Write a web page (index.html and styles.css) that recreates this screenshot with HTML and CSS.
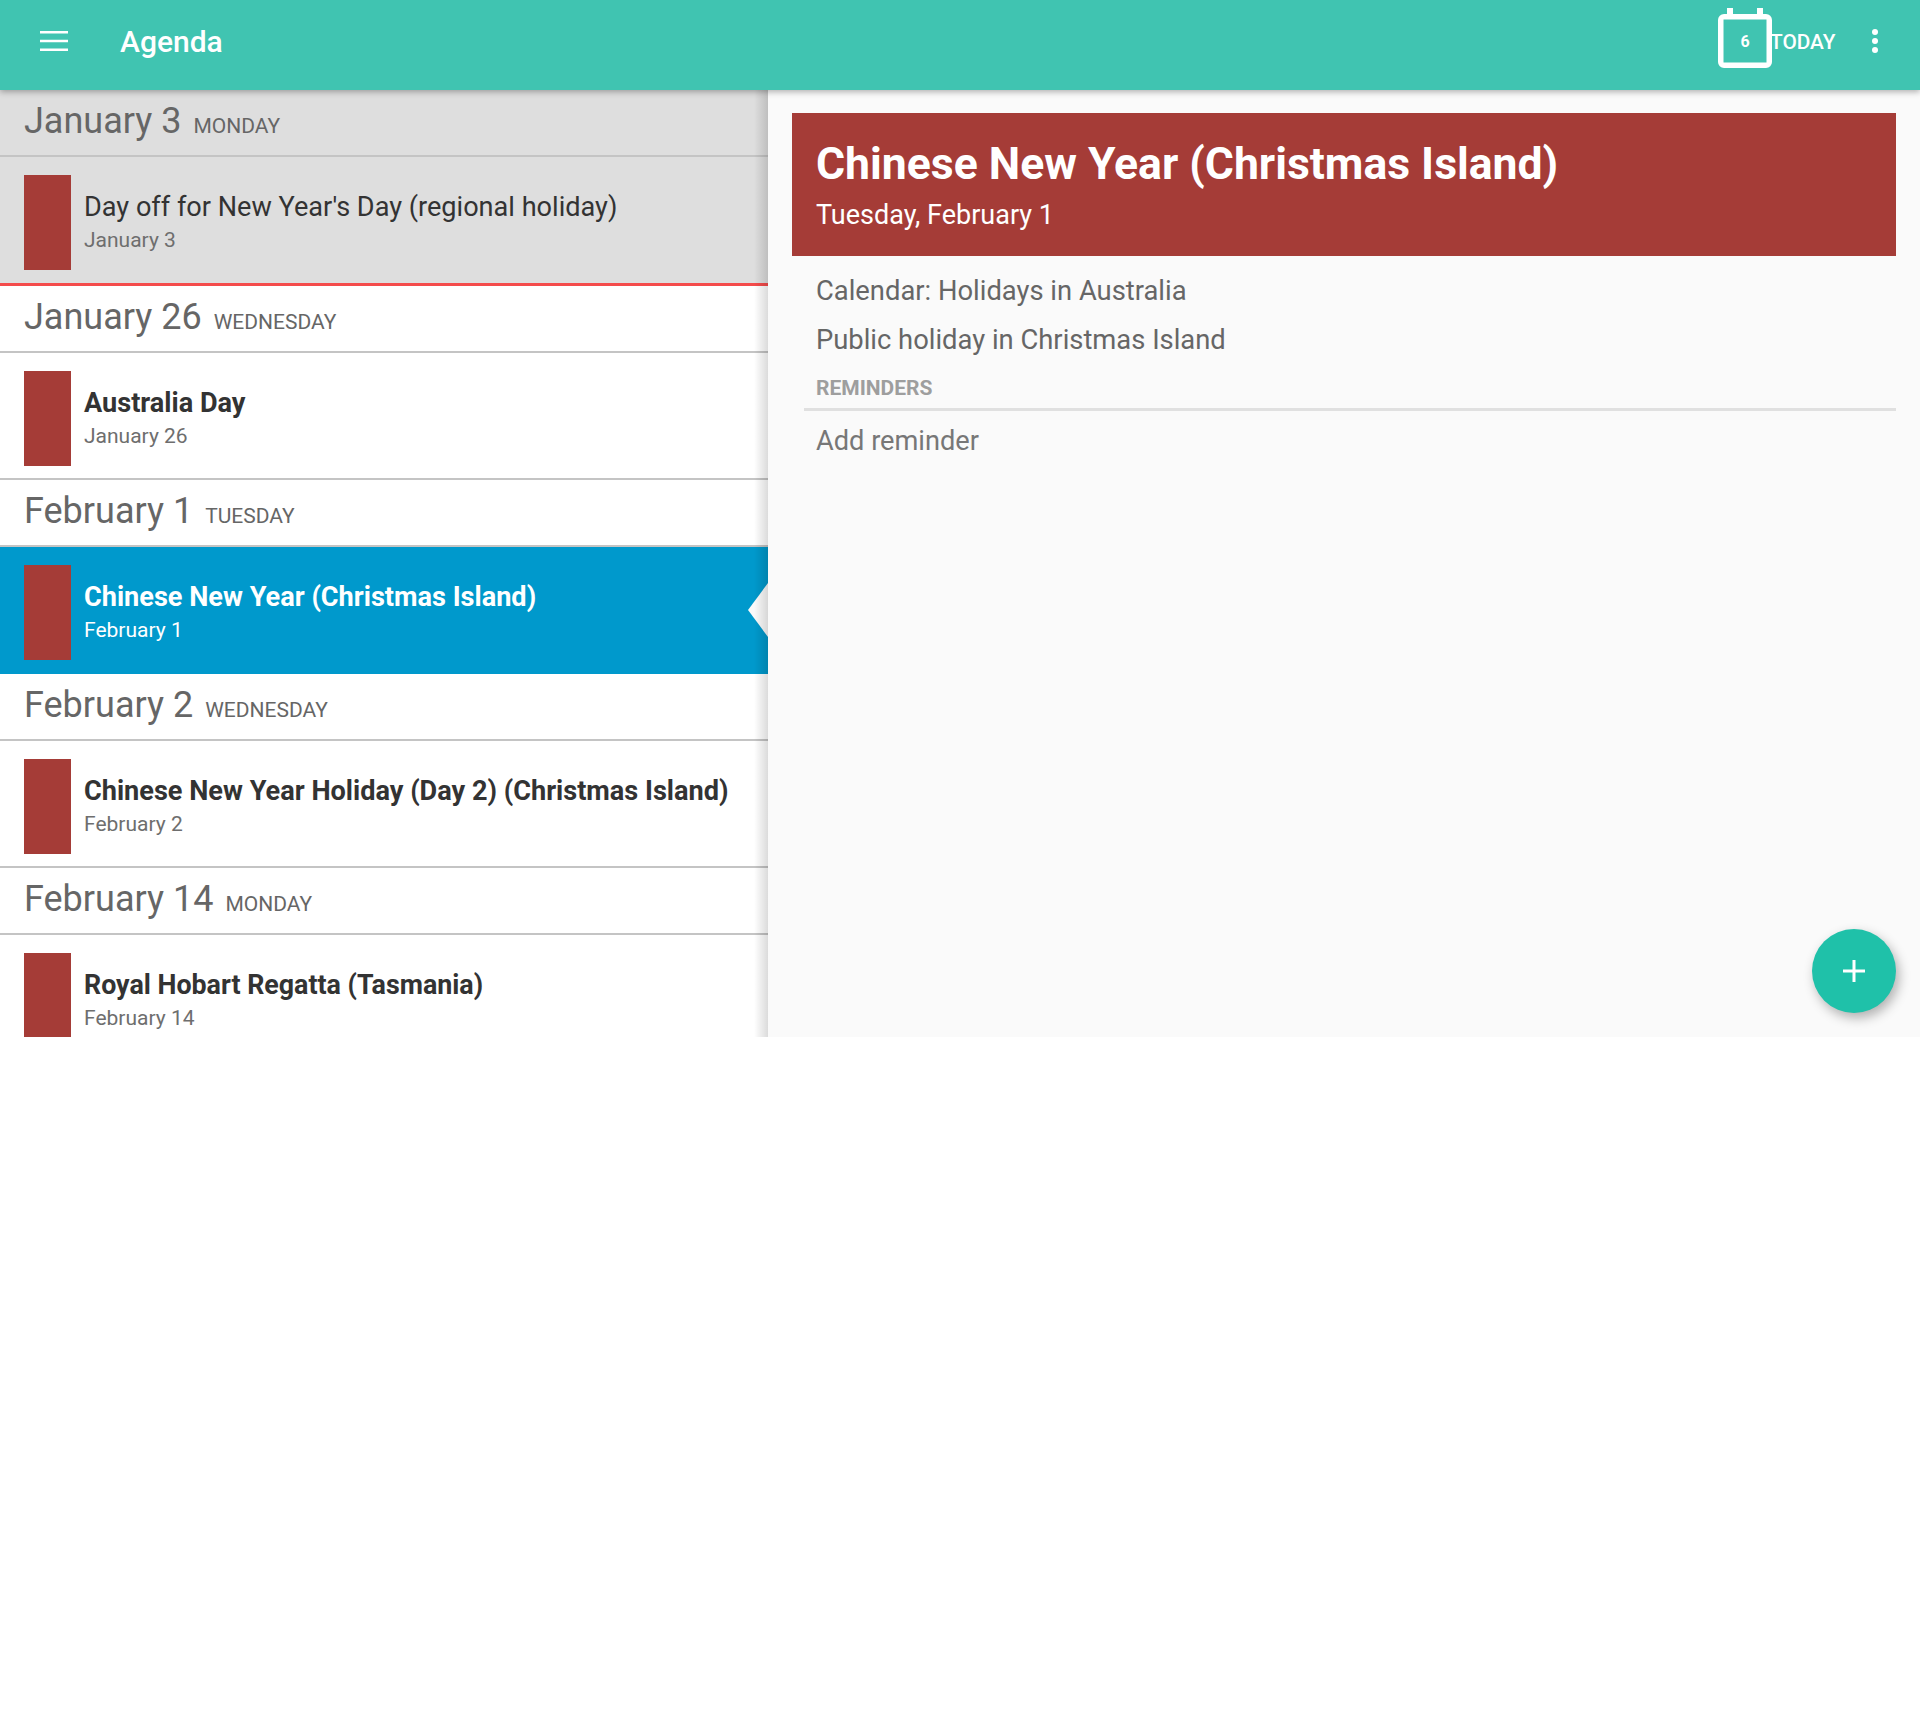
FILE: index.html
```html
<!DOCTYPE html>
<html lang="en">
<head>
<meta charset="utf-8">
<title>Agenda</title>
<link rel="stylesheet" href="styles.css">
</head>
<body>
<div class="app">
  <header class="topbar">
    <button class="menu-btn" aria-label="Menu">
      <svg width="28" height="20" viewBox="0 0 28 20"><path d="M0 1.2h28M0 10h28M0 18.800h28" stroke="#fff" stroke-width="2.6" fill="none"/></svg>
    </button>
    <h1 class="app-title">Agenda</h1>
    <div class="today">
      <span class="cal-icon">
        <svg width="54" height="60" viewBox="0 0 54 60"><path d="M9 0h6v6h24v-6h6v6h3a6 6 0 0 1 6 6v42a6 6 0 0 1-6 6h-42a6 6 0 0 1-6-6v-42a6 6 0 0 1 6-6h3zM5.500 11.500v43h43v-43z" fill="#fff" fill-rule="evenodd"/></svg>
        <span class="cal-num">6</span>
      </span>
      <span class="today-label">TODAY</span>
    </div>
    <button class="more-btn" aria-label="More">
      <svg width="6" height="24" viewBox="0 0 6 24"><circle cx="3" cy="3" r="3" fill="#fff"/><circle cx="3" cy="12" r="3" fill="#fff"/><circle cx="3" cy="21" r="3" fill="#fff"/></svg>
    </button>
  </header>
  <main class="content">
    <section class="agenda">
      <div class="past">
        <div class="day-head"><span class="day-date">January 3</span><span class="day-name">MONDAY</span></div>
        <div class="event"><span class="swatch"></span><div class="event-text"><div class="event-title regular">Day off for New Year's Day (regional holiday)</div><div class="event-date">January 3</div></div></div>
      </div>
      <div class="now-line"></div>
      <div class="day-head"><span class="day-date">January 26</span><span class="day-name">WEDNESDAY</span></div>
      <div class="event"><span class="swatch"></span><div class="event-text"><div class="event-title">Australia Day</div><div class="event-date">January 26</div></div></div>
      <div class="day-head"><span class="day-date">February 1</span><span class="day-name">TUESDAY</span></div>
      <div class="event selected"><span class="swatch"></span><div class="event-text"><div class="event-title">Chinese New Year (Christmas Island)</div><div class="event-date">February 1</div></div></div>
      <div class="day-head"><span class="day-date">February 2</span><span class="day-name">WEDNESDAY</span></div>
      <div class="event"><span class="swatch"></span><div class="event-text"><div class="event-title">Chinese New Year Holiday (Day 2) (Christmas Island)</div><div class="event-date">February 2</div></div></div>
      <div class="day-head"><span class="day-date">February 14</span><span class="day-name">MONDAY</span></div>
      <div class="event"><span class="swatch"></span><div class="event-text"><div class="event-title narrow">Royal Hobart Regatta (Tasmania)</div><div class="event-date">February 14</div></div></div>
    </section>
    <section class="detail">
      <div class="detail-head">
        <h2 class="detail-title">Chinese New Year (Christmas Island)</h2>
        <div class="detail-sub">Tuesday, February 1</div>
      </div>
      <div class="detail-line first">Calendar: Holidays in Australia</div>
      <div class="detail-line">Public holiday in Christmas Island</div>
      <div class="reminders-label">REMINDERS</div>
      <div class="add-reminder">Add reminder</div>
      <button class="fab" aria-label="Add">
        <svg width="22" height="22" viewBox="0 0 22 22"><path d="M11 0v22M0 11h22" stroke="#fff" stroke-width="3" fill="none"/></svg>
      </button>
    </section>
  </main>
</div>
</body>
</html>
```

FILE: styles.css
```css
* { box-sizing: border-box; }
html, body { margin: 0; padding: 0; background: #fff; }
body { font-family: Roboto, "Liberation Sans", sans-serif; }
button { border: 0; background: none; padding: 0; margin: 0; display: block; }

.app { height: 1037px; display: flex; flex-direction: column; overflow: hidden; position: relative; }

.topbar {
  height: 90px; flex: none; display: flex; align-items: center;
  background: #40c4b1; color: #fff; position: relative; z-index: 3;
  box-shadow: 0 2px 6px rgba(0,0,0,.3);
  padding-left: 40px;
}
.menu-btn { width: 28px; height: 20px; margin-top: -8px; }
.menu-btn svg { display: block; }
.app-title { margin: -8px 0 0 52px; font-size: 30px; font-weight: 500; flex: 1; }
.today { display: flex; align-items: center; margin-top: -1px; }
.cal-icon { position: relative; width: 54px; height: 60px; display: block; margin-top: -14px; }
.cal-icon svg { display: block; }
.cal-num { position: absolute; left: 0; right: 0; top: 21px; text-align: center; font-size: 16px; font-weight: 700; line-height: 26px; }
.today-label { font-size: 20.8px; font-weight: 500; line-height: 24px; margin: -6px 0 0 -2px; width: 65px; white-space: nowrap; }
.more-btn { width: 6px; height: 24px; margin: -8px 42px 0 37px; }
.more-btn svg { display: block; }

.content { flex: 1; min-height: 0; display: flex; }

.agenda { width: 768px; flex: none; background: #fff; overflow: hidden; position: relative; }
.agenda::after {
  content: ""; position: absolute; top: 0; right: 0; bottom: 0; width: 14px;
  background: linear-gradient(to right, rgba(0,0,0,0), rgba(0,0,0,.14));
  pointer-events: none;
}
.past { background: #dedede; }
.now-line { height: 3px; background: #f44b4b; }

.day-head {
  height: 67px; border-bottom: 2px solid #c4c4c4;
  display: flex; align-items: baseline; padding: 8px 0 0 24px; color: #666;
}
.day-date { font-size: 36px; line-height: 46px; }
.day-name { font-size: 21px; margin-left: 12px; }

.event { height: 127px; display: flex; padding: 18px 0 0 24px; color: #333; position: relative; border-bottom: 2px solid #c4c4c4; }
.past .event { height: 126px; border-bottom: 0; }
.swatch { width: 47px; height: 95px; background: #a53c37; flex: none; }
.event-text { margin-left: 13px; padding-top: 14px; }
.event-title { font-size: 27.12px; font-weight: 700; line-height: 36px; color: #333; white-space: nowrap; }
.event-title.regular { font-weight: 400; }
.event-title.narrow { font-size: 26.8px; }
.event-date { font-size: 21px; line-height: 30px; color: #6e6e6e; }

.event.selected { background: #0099cc; border-bottom: 0; }
.event.selected .event-title, .event.selected .event-date { color: #fff; }
.event.selected::after {
  content: ""; position: absolute; right: 0; top: 36px; width: 20px; height: 54px;
  background: #fafafa; clip-path: polygon(100% 0, 0 50%, 100% 100%);
}

.detail { flex: 1; background: #fafafa; position: relative; padding: 23px 24px 0 24px; color: #666; }
.detail-head { background: #a53c37; height: 143px; padding: 24px 24px 0; color: #fff; }
.detail-title { margin: 0; font-size: 44.5px; font-weight: 700; line-height: 54px; }
.detail-sub { font-size: 27px; line-height: 36px; margin-top: 6px; }
.detail-line { font-size: 27.36px; line-height: 40px; padding-left: 24px; height: 49px; }
.detail-line.first { margin-top: 15px; }
.reminders-label {
  margin: 0 0 0 12px; padding: 5px 0 0 12px; height: 42px; border-bottom: 3px solid #e0e0e0;
  font-size: 21px; font-weight: 700; line-height: 28px; color: #9e9e9e;
}
.add-reminder { font-size: 27.2px; line-height: 40px; padding: 10px 0 0 24px; color: #777; }
.fab {
  position: absolute; right: 24px; bottom: 24px; width: 84px; height: 84px; border-radius: 50%;
  background: #1fc1a9; display: flex; align-items: center; justify-content: center;
  box-shadow: 3px 5px 12px rgba(0,0,0,.3);
}
.fab svg { display: block; }
```
